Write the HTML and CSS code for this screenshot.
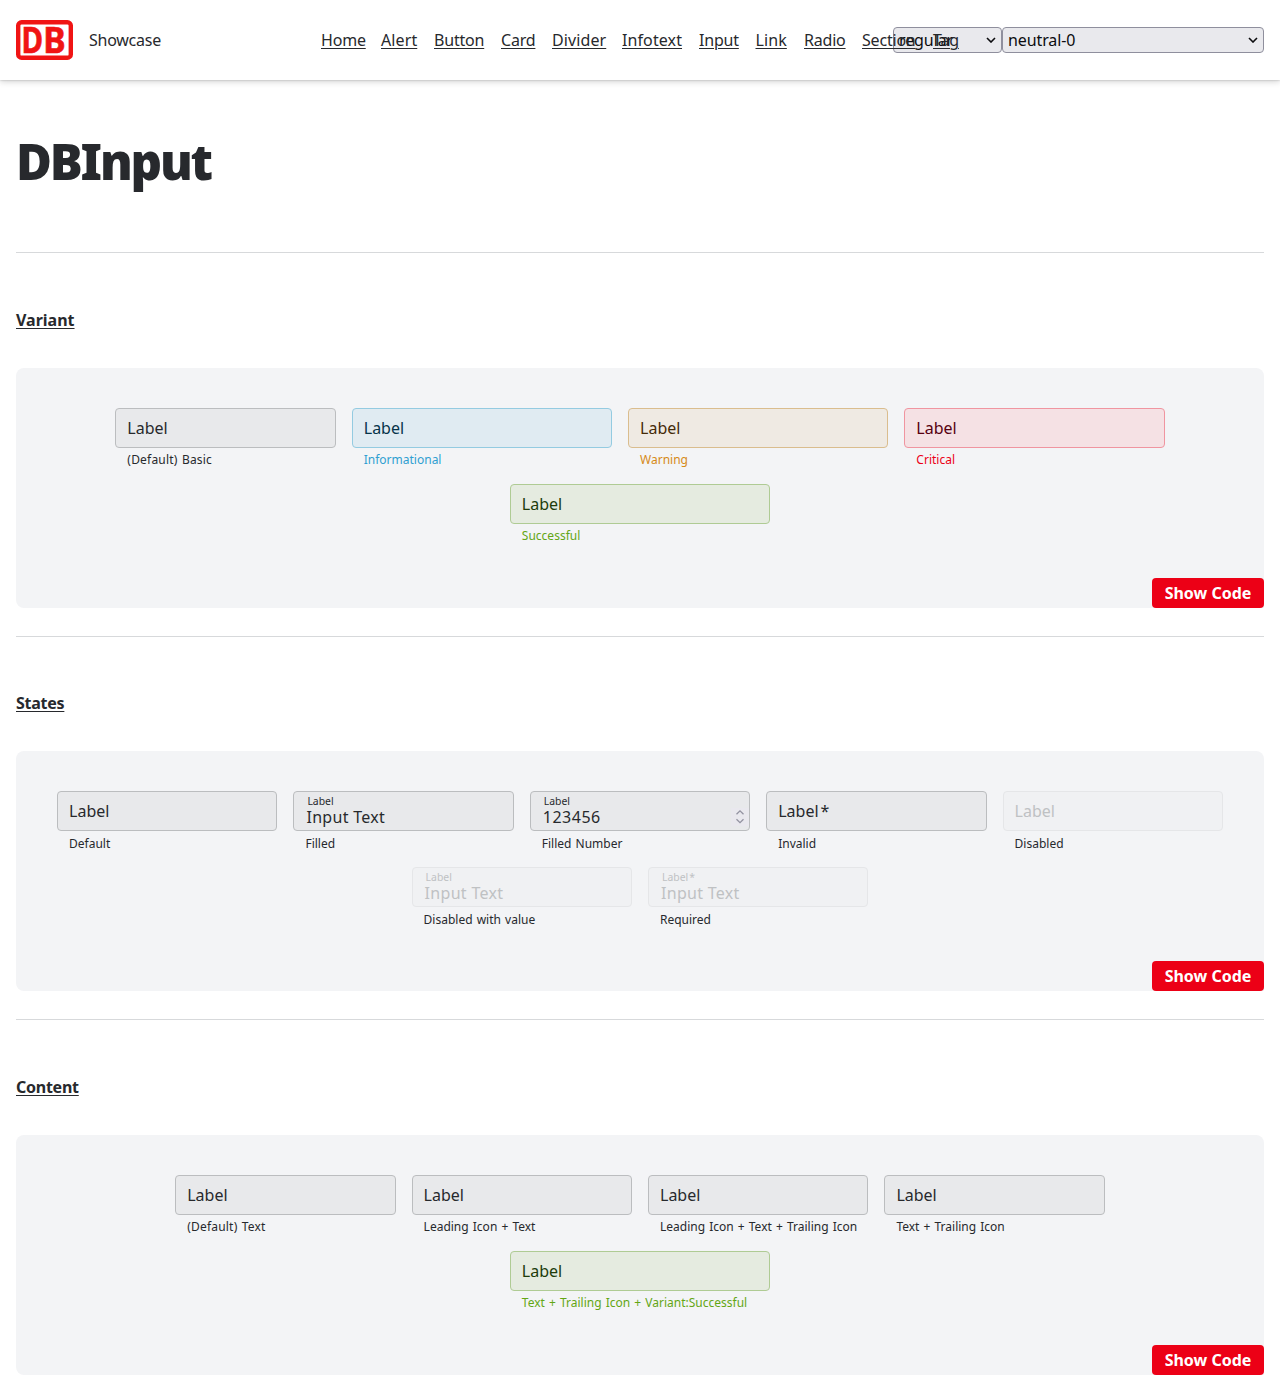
FILE: index.html
```html
<!DOCTYPE html>
<html lang="en">
<head>
<meta charset="utf-8">
<title>Showcase</title>
<link rel="stylesheet" href="styles.css">
</head>
<body>
<header class="header">
  <svg class="logo" viewBox="0 0 57 40" role="img" aria-label="DB">
    <rect x="2.2" y="2.2" width="52.6" height="35.6" rx="3.4" fill="#fff" stroke="#f01414" stroke-width="4.4"/>
    <text class="logo-letter" transform="translate(5.6 32.6) scale(.83 1)">D</text>
    <text class="logo-letter" transform="translate(27.3 32.6) scale(.95 1)">B</text>
  </svg>
  <span class="brand">Showcase</span>
  <nav class="nav">
    <a>Home</a><a class="open">Alert</a><a>Button</a><a>Card</a><a class="open">Divider</a><a class="open">Infotext</a><a>Input</a><a class="open">Link</a><a>Radio</a><a>Section</a><a>Tag</a>
  </nav>
  <div class="selects">
    <div class="select select-density"><span>regular</span><svg class="chevron" viewBox="0 0 10 6"><path d="M1 1l4 4 4-4"/></svg></div>
    <div class="select select-color"><span>neutral-0</span><svg class="chevron" viewBox="0 0 10 6"><path d="M1 1l4 4 4-4"/></svg></div>
  </div>
</header>
<main class="main">
  <h1 class="title">DBInput</h1>

  <section class="section">
    <h2 class="section-title"><a>Variant</a></h2>
    <div class="panel">
      <div class="row">
        <div class="field"><div class="box"><span class="label">Label</span></div><p class="helper loose">(Default) Basic</p></div>
        <div class="field wide info"><div class="box"><span class="label">Label</span></div><p class="helper">Informational</p></div>
        <div class="field wide warning"><div class="box"><span class="label">Label</span></div><p class="helper">Warning</p></div>
        <div class="field wide critical"><div class="box"><span class="label">Label</span></div><p class="helper">Critical</p></div>
        <div class="field wide success"><div class="box"><span class="label">Label</span></div><p class="helper">Successful</p></div>
      </div>
      <button class="code">Show Code</button>
    </div>
  </section>

  <section class="section">
    <h2 class="section-title tight"><a>States</a></h2>
    <div class="panel">
      <div class="row">
        <div class="field"><div class="box"><span class="label">Label</span></div><p class="helper">Default</p></div>
        <div class="field"><div class="box filled"><span class="float">Label</span><span class="value">Input Text</span></div><p class="helper">Filled</p></div>
        <div class="field"><div class="box filled"><span class="float">Label</span><span class="value number">123456</span><span class="spinner"><svg viewBox="0 0 10 16"><path d="M1.500 5.200L5 1.800l3.500 3.400M1.500 10.300L5 13.700l3.500-3.400"/></svg></span></div><p class="helper">Filled Number</p></div>
        <div class="field"><div class="box"><span class="label">Label<span class="star">*</span></span></div><p class="helper">Invalid</p></div>
        <div class="field"><div class="box disabled"><span class="label">Label</span></div><p class="helper">Disabled</p></div>
        <div class="field"><div class="box filled disabled"><span class="float">Label</span><span class="value">Input Text</span></div><p class="helper">Disabled with value</p></div>
        <div class="field"><div class="box filled disabled"><span class="float">Label<span class="star">*</span></span><span class="value">Input Text</span></div><p class="helper">Required</p></div>
      </div>
      <button class="code">Show Code</button>
    </div>
  </section>

  <section class="section">
    <h2 class="section-title tight"><a>Content</a></h2>
    <div class="panel">
      <div class="row content-row">
        <div class="field"><div class="box"><span class="label">Label</span></div><p class="helper loose">(Default) Text</p></div>
        <div class="field"><div class="box"><span class="label">Label</span></div><p class="helper">Leading Icon + Text</p></div>
        <div class="field"><div class="box"><span class="label">Label</span></div><p class="helper">Leading Icon + Text + Trailing Icon</p></div>
        <div class="field"><div class="box"><span class="label">Label</span></div><p class="helper">Text + Trailing Icon</p></div>
        <div class="field wide success"><div class="box"><span class="label">Label</span></div><p class="helper">Text + Trailing Icon + Variant:Successful</p></div>
      </div>
      <button class="code">Show Code</button>
    </div>
  </section>
</main>
</body>
</html>
```

FILE: styles.css
```css
* { box-sizing: border-box; }
body {
  margin: 0;
  background: #fff;
  color: #27292d;
  font: 16px/24px "Noto Sans", sans-serif;
}
.header {
  display: flex;
  align-items: center;
  height: 80px;
  padding: 0 16px;
  box-shadow: 0 0 2px rgba(0,0,0,.25), 0 2px 6px rgba(0,0,0,.16);
}
.logo { width: 57px; height: 40px; flex: none; }
.logo-letter {
  font: 700 35.500px "Noto Sans", sans-serif;
  fill: #f01414;
  stroke: #f01414;
  stroke-width: .6;
}
.brand { width: 232px; flex: none; padding-left: 16px; letter-spacing: -.25px; }
.nav {
  position: relative;
  z-index: 1;
  display: grid;
  grid-template-columns: 44px 37px 51px 35px 54px 61px 40.500px 32.500px 42px 55px 27px;
  gap: 16px;
  width: 572px;
  flex: none;
  margin-left: 16px;
  letter-spacing: -.2px;
  white-space: nowrap;
}
.nav a { justify-self: start; }
.nav .open { letter-spacing: .1px; }
.nav a, .section-title a { text-decoration: underline; text-underline-offset: 2px; text-decoration-thickness: 1px; }
.selects { display: flex; flex: none; }
.select {
  display: flex;
  align-items: center;
  justify-content: space-between;
  height: 26px;
  padding: 0 5px;
  border: 1px solid #8f8f9d;
  border-radius: 4px;
  background: #e9e9ed;
  color: #0c0c0f;
  letter-spacing: -.1px;
}
.select-density { width: 109px; }
.select-color { width: 262px; }
.chevron { width: 10px; height: 6px; fill: none; stroke: #0c0c0f; stroke-width: 1.6; }
.main { padding: 0 16px; }
.title {
  margin: 0;
  height: 172.3px;
  padding-top: 49px;
  font-size: 49px;
  line-height: 64px;
  font-weight: 900;
  letter-spacing: -2.2px;
}
.section { height: 383.3px; border-top: 1px solid #d7d9db; }
.section-title {
  margin: 0;
  height: 114.7px;
  padding-top: 54.7px;
  font-size: 16px;
  line-height: 24px;
  font-weight: 700;
}
.tight { letter-spacing: -.25px; }
.panel {
  display: flex;
  flex-direction: column;
  justify-content: space-between;
  height: 240px;
  padding-top: 40px;
  border-radius: 8px 8px 0 8px;
  background: #f3f4f6;
}
.row { display: flex; flex-wrap: wrap; justify-content: center; gap: 16px; padding: 0 40px; }
.content-row { padding: 0 150px; }
.field { width: 220.4px; }
.wide { width: 260.3px; }
.box {
  display: flex;
  align-items: center;
  height: 40px;
  padding: 0 11px;
  border: 1px solid #bbbdbf;
  border-radius: 4px;
  background: #e8e9eb;
}
.helper {
  margin: 0;
  height: 20px;
  padding: 2.4px 0 0 12px;
  font-size: 12px;
  line-height: 20px;
  white-space: nowrap;
  word-spacing: 1px;
}
.loose { letter-spacing: .2px; }
.filled { position: relative; flex-direction: column; align-items: flex-start; justify-content: flex-start; }
.float { height: 15px; padding: 2px 0 0 2px; font-size: 10.4px; line-height: 15px; }
.value { padding-left: 1px; line-height: 20px; letter-spacing: .3px; }
.number { letter-spacing: .5px; }
.star { margin-left: 2px; }
.float .star { margin-left: 1px; }
.spinner {
  position: absolute;
  top: 16px;
  right: 0;
  width: 18px;
  height: 18px;
  background: #e9e8ee;
}
.spinner svg { display: block; width: 10px; height: 16px; margin: 1px 4px; fill: none; stroke: #9292a0; stroke-width: 1.3; }
.disabled { border-color: #e5e6e8; background: #f0f1f3; color: #bfc1c3; }
.info .box { border-color: #94cbe1; background: #e0ebf2; color: #07344a; }
.info .helper { color: #309fd1; }
.warning .box { border-color: #dabd8e; background: #efeae3; color: #452b09; }
.warning .helper { color: #d68a18; }
.critical .box { border-color: #f095a0; background: #f5e1e4; color: #570010; }
.critical .helper { color: #ec0016; }
.success .box { border-color: #afcb94; background: #e5ebe0; color: #203c0b; }
.success .helper { color: #63a615; }
.code {
  align-self: flex-end;
  width: 112px;
  height: 30px;
  padding: 0;
  border: 0;
  border-radius: 4px;
  background: #ec0016;
  color: #fff;
  font: 700 16px/30px "Noto Sans", sans-serif;
}
```
